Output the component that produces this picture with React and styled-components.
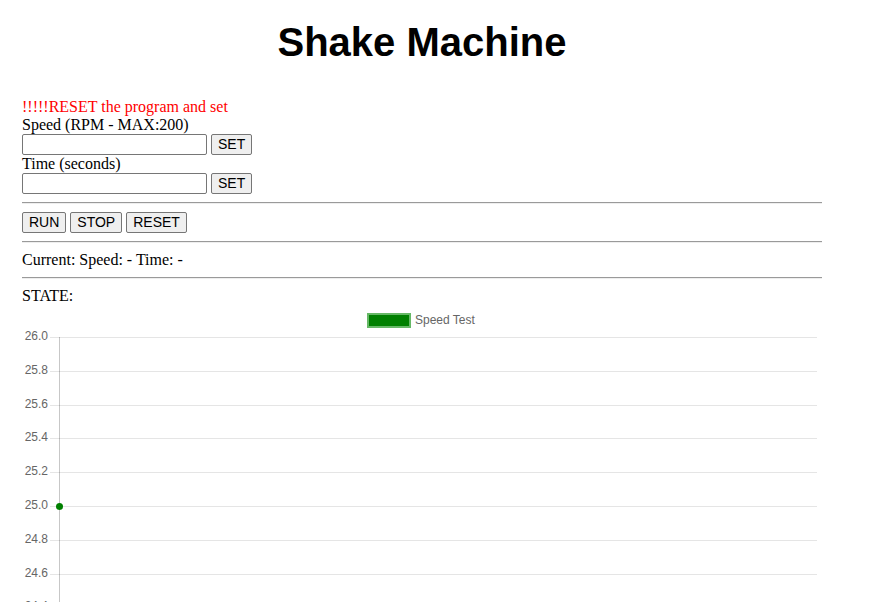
import React from 'react'
import styled, { createGlobalStyle } from 'styled-components'

const GlobalStyle = createGlobalStyle`
  body {
    margin: 8px;
    font-family: 'Liberation Serif', 'Times New Roman', serif;
    font-size: 16px;
    background: #fff;
    color: #000;
  }
`

const Page = styled.div`
  width: 800px;
  padding: 11px 14px 0;
`

const Title = styled.h1`
  margin: 0 0 33px;
  font-family: 'Liberation Sans', Arial, sans-serif;
  font-size: 40px;
  line-height: 46px;
  font-weight: bold;
  text-align: center;
`

const Line = styled.div`
  line-height: 18px;
  color: ${(p) => (p.$warn ? '#ff0000' : '#000')};
`

const Row = styled.div`
  display: flex;
  gap: 4px;
  height: 21px;
`

const Field = styled.input`
  box-sizing: border-box;
  width: 185px;
  height: 21px;
  margin: 0;
  border: 1px solid #767676;
  border-radius: 2px;
  padding: 1px 2px;
  font-size: 13.33px;
`

const Button = styled.button`
  box-sizing: border-box;
  height: 21px;
  margin: 0;
  padding: 1px 6px;
  border: 1px solid #767676;
  border-radius: 2px;
  background: #efefef;
  color: #000;
  font-family: 'Liberation Sans', Arial, sans-serif;
  font-size: 14px;
  line-height: 17px;
`

const Rule = styled.hr`
  margin: 8px 0;
  height: 0;
  border: none;
  border-top: 1px solid #9a9a9a;
  border-bottom: 1px solid #eeeeee;
`

const ChartBox = styled.div`
  width: 800px;
  height: 400px;
`

const ticks = ['26.0', '25.8', '25.6', '25.4', '25.2', '25.0', '24.8', '24.6', '24.4', '24.2', '24.0']
const TOP = 32
const STEP = 33.8
const AXIS_X = 37

function SpeedChart() {
  return (
    <ChartBox>
      <svg width="800" height="400" viewBox="0 0 800 400">
        <rect x="346" y="9" width="42" height="13" fill="#008000" stroke="#66b866" strokeWidth="2" />
        <text x="393" y="19" fontFamily="Liberation Sans, Arial, sans-serif" fontSize="12" fill="#666">
          Speed Test
        </text>
        {ticks.map((t, i) => {
          const base = Math.round(TOP + i * STEP)
          return (
            <g key={t}>
              <line x1="28" y1={base + 0.5} x2="795" y2={base + 0.5} stroke="rgba(0,0,0,0.1)" strokeWidth="1" />
              <text
                x="26"
                y={base + 3}
                textAnchor="end"
                fontFamily="Liberation Sans, Arial, sans-serif"
                fontSize="12"
                fill="#666"
              >
                {t}
              </text>
            </g>
          )
        })}
        <line x1={AXIS_X + 0.5} y1={TOP} x2={AXIS_X + 0.5} y2={TOP + 10 * STEP + 10} stroke="rgba(0,0,0,0.22)" />
        <circle cx={AXIS_X + 0.5} cy={Math.round(TOP + 5 * STEP) + 0.5} r="3.5" fill="#008000" />
      </svg>
    </ChartBox>
  )
}

export default function App() {
  return (
    <Page>
      <GlobalStyle />
      <Title>Shake Machine</Title>
      <Line $warn>!!!!!RESET the program and set</Line>
      <Line>Speed (RPM - MAX:200)</Line>
      <Row>
        <Field type="text" />
        <Button>SET</Button>
      </Row>
      <Line>Time (seconds)</Line>
      <Row>
        <Field type="text" />
        <Button>SET</Button>
      </Row>
      <Rule />
      <Row>
        <Button>RUN</Button>
        <Button>STOP</Button>
        <Button>RESET</Button>
      </Row>
      <Rule />
      <Line>Current: Speed: - Time: -</Line>
      <Rule />
      <Line>STATE:</Line>
      <SpeedChart />
    </Page>
  )
}
